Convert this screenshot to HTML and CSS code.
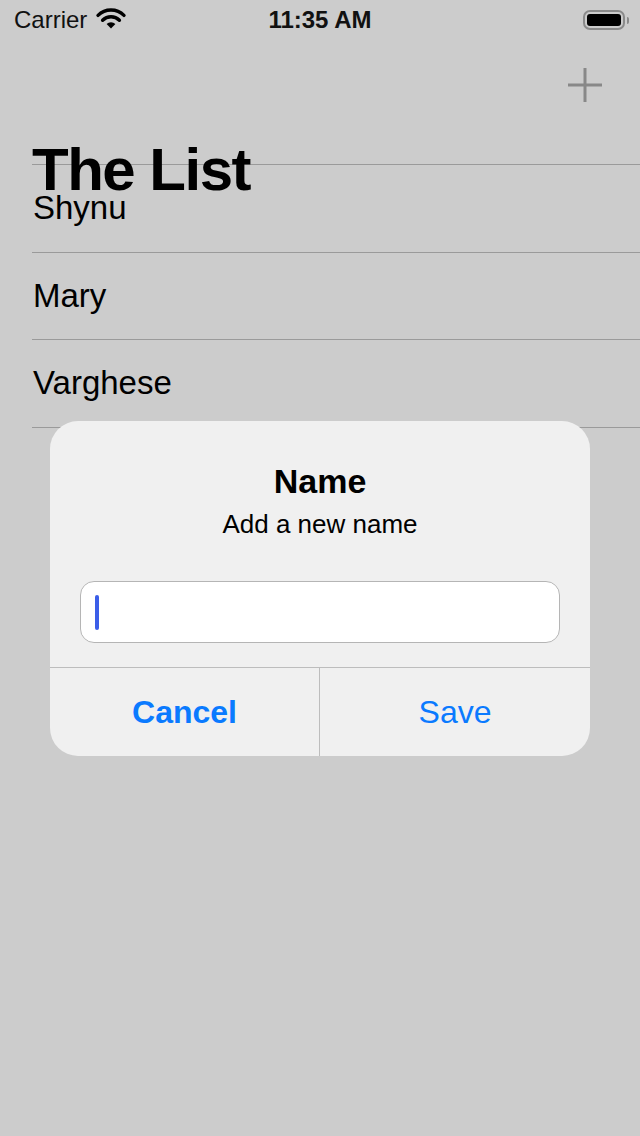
FILE: index.html
```html
<!DOCTYPE html>
<html>
<head>
<meta charset="utf-8">
<link rel="stylesheet" href="styles.css">
</head>
<body>
<div class="screen">
  <div class="status">
    <div class="status-left">
      <span class="carrier">Carrier</span>
      <svg class="wifi" width="32" height="24" viewBox="0 0 32 24">
        <path d="M16 21.5 L11.6 17 A6.4 6.4 0 0 1 20.4 17 Z" fill="#000"/>
        <path d="M7.6 13.2 A11.8 11.8 0 0 1 24.4 13.2" fill="none" stroke="#000" stroke-width="3.4" stroke-linecap="round"/>
        <path d="M3 8.4 A18.4 18.4 0 0 1 29 8.4" fill="none" stroke="#000" stroke-width="3.4" stroke-linecap="round"/>
      </svg>
    </div>
    <div class="time">11:35 AM</div>
    <div class="status-right">
      <div class="battery"><div class="battery-fill"></div></div>
      <div class="battery-nub"></div>
    </div>
  </div>
  <div class="nav">
    <svg class="plus" width="36" height="36" viewBox="0 0 36 36">
      <path d="M18 1 V35 M1 18 H35" stroke="#888888" stroke-width="3" fill="none"/>
    </svg>
  </div>
  <h1 class="title">The List</h1>
  <ul class="list">
    <li class="row">Shynu</li>
    <li class="row">Mary</li>
    <li class="row">Varghese</li>
  </ul>

  <div class="alert">
    <div class="alert-title">Name</div>
    <div class="alert-msg">Add a new name</div>
    <div class="field"><span class="cursor"></span></div>
    <div class="actions">
      <div class="btn btn-cancel">Cancel</div>
      <div class="btn btn-save">Save</div>
    </div>
  </div>
</div>
</body>
</html>
```

FILE: styles.css
```css
html, body {
  margin: 0;
  padding: 0;
  background: #cccccc;
}
body {
  font-family: "Liberation Sans", Arial, sans-serif;
  color: #000;
}
.screen {
  position: relative;
  width: 640px;
  height: 1136px;
  overflow: hidden;
  background: #cccccc;
}
.status {
  height: 40px;
  display: grid;
  grid-template-columns: 1fr auto 1fr;
  align-items: center;
}
.status-left {
  display: flex;
  align-items: center;
  padding-left: 14px;
  gap: 8px;
}
.carrier {
  font-size: 24px;
  line-height: 40px;
  color: #111;
}
.wifi {
  margin-top: -2px;
}
.time {
  font-size: 24px;
  font-weight: bold;
  line-height: 40px;
  color: #111;
}
.status-right {
  display: flex;
  justify-content: flex-end;
  align-items: center;
  padding-right: 11px;
}
.battery {
  width: 42px;
  height: 20px;
  box-sizing: border-box;
  border: 2px solid #8a8a8a;
  border-radius: 7px;
  padding: 2px;
}
.battery-fill {
  width: 100%;
  height: 100%;
  background: #000;
  border-radius: 3px;
}
.battery-nub {
  width: 2px;
  height: 7px;
  background: #8a8a8a;
  border-radius: 0 2px 2px 0;
  margin-left: 2px;
}
.nav {
  height: 95px;
  display: flex;
  justify-content: flex-end;
  align-items: flex-start;
  padding-right: 37px;
  box-sizing: border-box;
  padding-top: 27px;
}
.title {
  margin: 0 0 -41px 0;
  padding-left: 32px;
  font-size: 60px;
  line-height: 70px;
  font-weight: bold;
  letter-spacing: -1.5px;
  position: relative;
  z-index: 1;
}
.list {
  list-style: none;
  margin: 0 0 0 32px;
  padding: 0;
}
.row {
  height: 86.5px;
  border-top: 1px solid #9a9a9a;
  display: flex;
  align-items: center;
  font-size: 33px;
  padding-left: 1px;
}
.row:last-child {
  border-bottom: 1px solid #9a9a9a;
}
.alert {
  position: absolute;
  left: 50px;
  top: 421px;
  width: 540px;
  background: #f0f0f0;
  border-radius: 28px;
  overflow: hidden;
  z-index: 2;
  text-align: center;
}
.alert-title {
  padding-top: 40px;
  font-size: 34px;
  line-height: 40px;
  font-weight: bold;
}
.alert-msg {
  margin-top: 7px;
  font-size: 26px;
  line-height: 32px;
}
.field {
  margin: 41px 30px 0 30px;
  height: 62px;
  box-sizing: border-box;
  background: #fff;
  border: 1px solid #b5b5b5;
  border-radius: 14px;
  display: flex;
  align-items: center;
  padding-left: 14px;
}
.cursor {
  width: 4px;
  height: 35px;
  background: #3b5ee8;
  border-radius: 2px;
}
.actions {
  margin-top: 24px;
  border-top: 1px solid #bdbdbd;
  display: grid;
  grid-template-columns: 1fr 1fr;
  height: 88px;
}
.btn {
  display: flex;
  align-items: center;
  justify-content: center;
  font-size: 32px;
  color: #0a7aff;
}
.btn-cancel {
  font-weight: bold;
  border-right: 1px solid #bdbdbd;
}
```
